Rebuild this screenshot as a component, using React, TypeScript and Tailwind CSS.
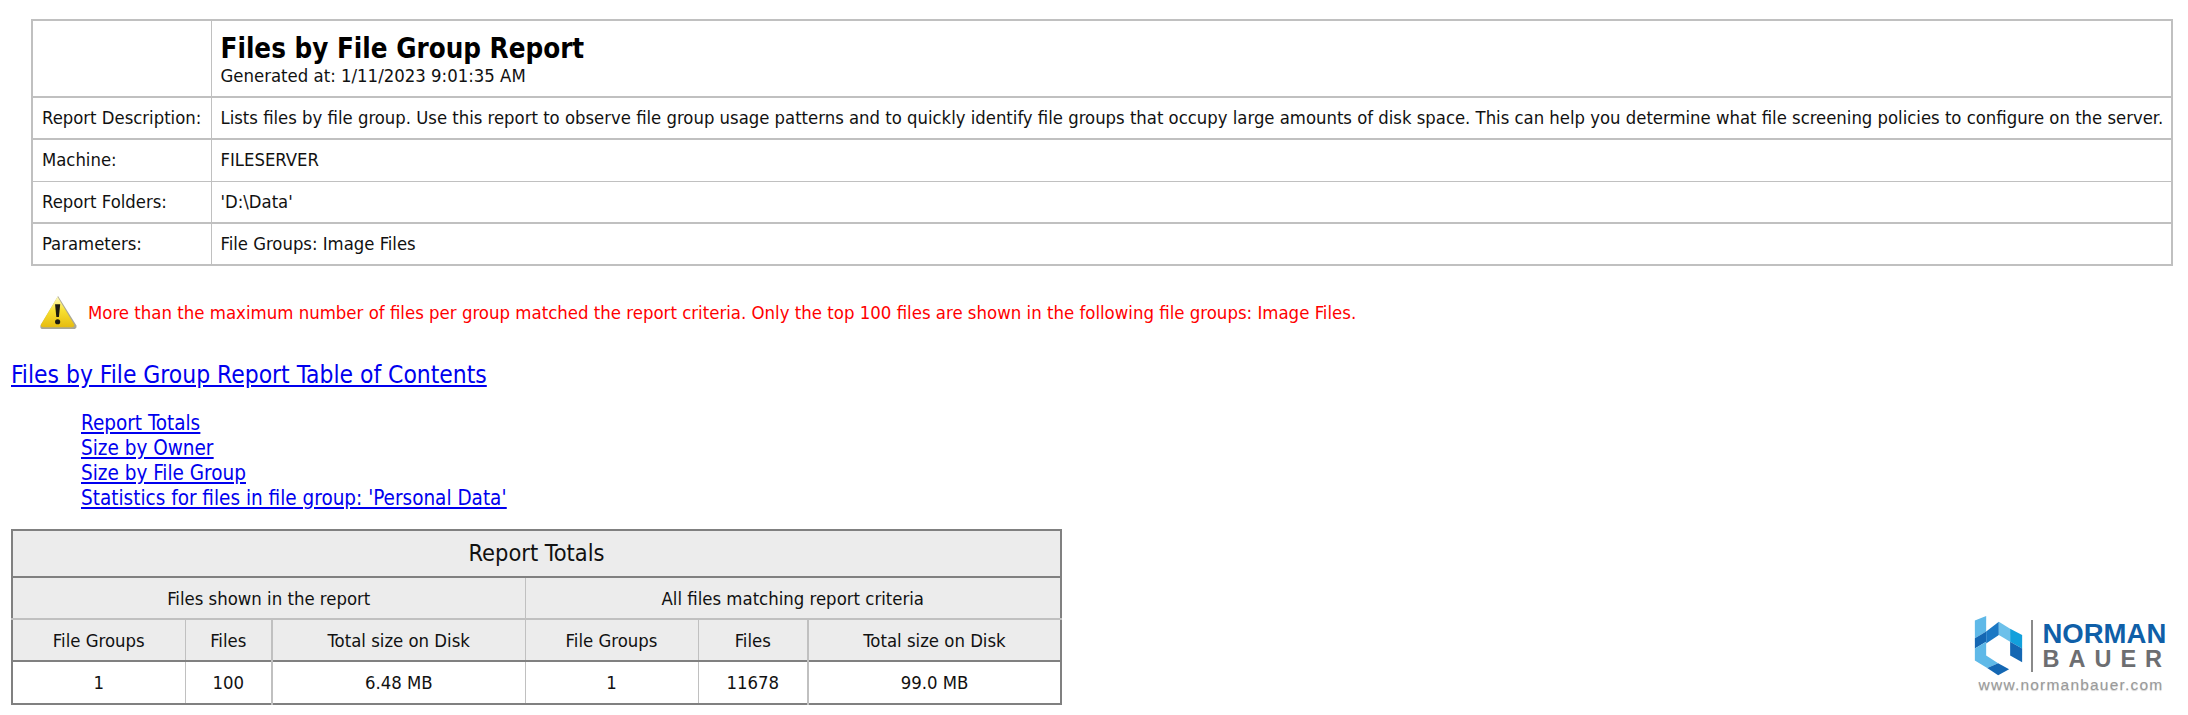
const F = { fontFamily: '"DejaVu Sans", sans-serif', fontStretch: 'condensed' } as const;

function WarningIcon() {
  return (
    <svg width="40" height="35" viewBox="0 0 42 38" className="shrink-0">
      <defs>
        <linearGradient id="wg" x1="0" y1="0" x2="0" y2="1">
          <stop offset="0" stopColor="#fffbc0" />
          <stop offset="0.45" stopColor="#f8e030" />
          <stop offset="1" stopColor="#e6bc10" />
        </linearGradient>
      </defs>
      <path d="M21 1 L41 33 Q42 37 37 37 L5 37 Q1 37 2 33 Z" fill="#8d8a70" opacity="0.75" />
      <path d="M20.5 2 L38.5 32 Q39 35 36 35 L5 35 Q2 35 2.5 32 Z" fill="url(#wg)" />
      <path d="M17.8 10 L23.4 10 L22 24 L19.2 24 Z" fill="#1c1a10" />
      <circle cx="20.6" cy="29" r="2.8" fill="#1c1a10" />
    </svg>
  );
}

function LogoMark() {
  return (
    <svg width="49" height="61" viewBox="70 52 142 178" className="shrink-0">
      <polygon points="72,68 105,55 105,100 72,120" fill="#5fb9e8" />
      <polygon points="72,120 105,100 105,130 72,150" fill="#1467b3" />
      <polygon points="72,150 105,130 105,170 140,193 108,207 72,185" fill="#5fb9e8" />
      <polygon points="108,207 140,193 172,210 140,228" fill="#1467b3" />
      <polygon points="105,100 142,72 142,110 105,135" fill="#1b78c4" />
      <polygon points="142,72 175,92 175,130 142,110" fill="#6cc0ea" />
      <polygon points="175,92 210,110 210,150 175,130" fill="#12a0dc" />
      <polygon points="175,130 210,150 210,190 175,170" fill="#1467b3" />
    </svg>
  );
}

function Logo() {
  return (
    <div className="mr-[20px] mt-[86px] flex w-[194px] flex-col items-center" style={{ fontFamily: '"Liberation Sans", sans-serif' }}>
      <div className="flex items-center">
        <LogoMark />
        <div className="ml-[8px] h-[52px] w-[2px] bg-[#8a8a8a]" />
        <div className="ml-[10px] flex w-[126px] flex-col">
          <span className="text-[27.5px] font-bold leading-[26px] text-[#0f5fa8]">NORMAN</span>
          <span className="text-[23.5px] font-bold leading-[24px] tracking-[9px] text-[#6d6e71]">BAUER</span>
        </div>
      </div>
      <span className="mt-[1px] text-[15.5px] leading-[16px] tracking-[1.2px] text-[#9a9a9a] [text-shadow:0_1px_1px_#cfcfcf]">www.normanbauer.com</span>
    </div>
  );
}

const infoRows = [
  ['Report Description:', 'Lists files by file group. Use this report to observe file group usage patterns and to quickly identify file groups that occupy large amounts of disk space. This can help you determine what file screening policies to configure on the server.', 'border-b-2'],
  ['Machine:', 'FILESERVER', 'border-b'],
  ['Report Folders:', "'D:\\Data'", 'border-b-2'],
  ['Parameters:', 'File Groups: Image Files', ''],
] as const;

const toc = ['Report Totals', 'Size by Owner', 'Size by File Group', "Statistics for files in file group: 'Personal Data'"];

const headers = ['File Groups', 'Files', 'Total size on Disk', 'File Groups', 'Files', 'Total size on Disk'];
const values = ['1', '100', '6.48 MB', '1', '11678', '99.0 MB'];
const sep = [
  'border-r border-[#c0c0c0]',
  'border-r-2 border-[#c0c0c0]',
  'border-r border-[#c0c0c0]',
  'border-r border-[#c0c0c0]',
  'border-r-2 border-[#c0c0c0]',
  '',
];

export default function App() {
  return (
    <div className="h-[715px] w-[2188px] overflow-hidden bg-white text-[#111]" style={F}>
      <div className="pl-[31px] pt-[19px]">
        <table className="w-[2142px] table-fixed border-collapse border-2 border-[#c0c0c0] text-[18.34px]">
          <colgroup>
            <col className="w-[179px]" />
            <col />
          </colgroup>
          <tbody>
            <tr className="h-[77px] border-b-2 border-[#c0c0c0]">
              <td className="border-r border-[#c0c0c0]" />
              <td className="pl-[9px] align-top">
                <div className="mt-[11px] text-[27.5px] font-bold leading-[32px] text-black">Files by File Group Report</div>
                <div className="mt-[2px] text-[18.4px] leading-[20px]">Generated at: 1/11/2023 9:01:35 AM</div>
              </td>
            </tr>
            {infoRows.map(([k, v, b]) => (
              <tr key={k} className={`h-[42px] border-[#c0c0c0] ${b}`}>
                <td className="border-r border-[#c0c0c0] pl-[9px] whitespace-nowrap">{k}</td>
                <td className="pl-[9px] whitespace-nowrap">{v}</td>
              </tr>
            ))}
          </tbody>
        </table>
      </div>

      <div className="mt-[29px] flex items-center pl-[38px]">
        <WarningIcon />
        <span className="ml-[10px] text-[18.44px] text-[#ff0000]">More than the maximum number of files per group matched the report criteria. Only the top 100 files are shown in the following file groups: Image Files.</span>
      </div>

      <a href="#toc" className="mt-[30px] ml-[11px] block w-fit text-[24.4px] leading-[30px] text-[#0000ee] underline">Files by File Group Report Table of Contents</a>

      <div className="mt-[21px] ml-[81px] flex flex-col items-start text-[20.5px] leading-[25px] text-[#0000ee] underline">
        {toc.map((t) => (
          <a key={t} href="#s">{t}</a>
        ))}
      </div>

      <div className="mt-[18px] flex items-start justify-between pl-[11px]">
        <table className="w-[1049px] table-fixed border-collapse border-2 border-[#808080] bg-[#ececec] text-center text-[18.4px]">
          <colgroup>
            <col className="w-[173px]" />
            <col className="w-[87px]" />
            <col className="w-[253px]" />
            <col className="w-[173px]" />
            <col className="w-[110px]" />
            <col className="w-[253px]" />
          </colgroup>
          <tbody>
            <tr className="h-[47px] border-b-2 border-[#808080]">
              <td colSpan={6} className="pt-[1px] text-[23.4px]">Report Totals</td>
            </tr>
            <tr className="h-[42px] border-b-2 border-[#c0c0c0]">
              <td colSpan={3} className="border-r border-[#c0c0c0] pt-[2px]">Files shown in the report</td>
              <td colSpan={3} className="pt-[2px]">All files matching report criteria</td>
            </tr>
            <tr className="h-[42px] border-b-2 border-[#808080]">
              {headers.map((h, i) => (
                <td key={i} className={`${sep[i]} pt-[2px]`}>{h}</td>
              ))}
            </tr>
            <tr className="h-[43px] bg-white">
              {values.map((v, i) => (
                <td key={i} className={`${sep[i]} pt-[1px]`}>{v}</td>
              ))}
            </tr>
          </tbody>
        </table>
        <Logo />
      </div>
    </div>
  );
}
